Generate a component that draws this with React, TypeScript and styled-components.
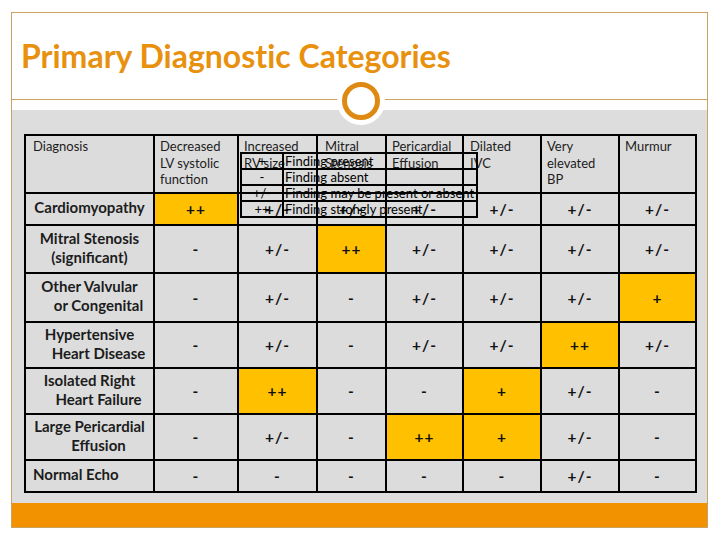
import React from 'react';
import styled, { createGlobalStyle } from 'styled-components';

const Global = createGlobalStyle`
  html, body { margin: 0; padding: 0; background: #ffffff; }
  body { font-family: Lato, "Liberation Sans", sans-serif; }
`;

const Slide = styled.div`
  position: relative;
  box-sizing: border-box;
  margin: 12px 0 0 11px;
  width: 697px;
  height: 516px;
  border: 1px solid #c9a25f;
  display: flex;
  flex-direction: column;
  background: #ffffff;
`;

const TitleBar = styled.div`
  height: 86px;
  box-sizing: border-box;
  padding: 24px 0 0 9px;
`;

const Title = styled.h1`
  margin: 0;
  font-family: Lato, "Liberation Sans", sans-serif;
  font-weight: 700;
  font-size: 32px;
  line-height: 38px;
  font-variant-ligatures: none;
  color: #e8910f;
  white-space: nowrap;
`;

const Divider = styled.div`
  height: 1px;
  background: #c9a25f;
`;

const Gap = styled.div`
  height: 10px;
`;

const Badge = styled.div`
  position: absolute;
  left: 325px;
  top: 64px;
  width: 48px;
  height: 48px;
  border-radius: 50%;
  background: #ffffff;
  display: flex;
  align-items: center;
  justify-content: center;
`;

const Ring = styled.div`
  box-sizing: border-box;
  width: 38px;
  height: 38px;
  border-radius: 50%;
  border: 5px solid #de8a12;
  background: #ffffff;
`;

const Content = styled.div`
  height: 393px;
  box-sizing: border-box;
  background: #dddddd;
  padding: 24px 0 0 12px;
`;

const Table = styled.div`
  position: relative;
  display: grid;
  grid-template-columns: 127px 82px 77px 67px 75px 76px 76px 75px;
  grid-template-rows: 56px 30px 46px 47px 44px 44px 44px 30px;
  gap: 2px;
  padding: 2px;
  background: #000000;
  width: fit-content;
`;

const HeadCell = styled.div<{ $pad: number }>`
  background: #dcdcdc;
  padding: 2px 4px 0 ${(p) => p.$pad}px;
  font-size: 13px;
  line-height: 16.5px;
  color: #1c1c1c;
`;

const LabelCell = styled.div<{ $align: 'left' | 'center' }>`
  background: #dcdcdc;
  display: flex;
  flex-direction: column;
  justify-content: center;
  align-items: ${(p) => (p.$align === 'left' ? 'flex-start' : 'center')};
  padding: 0 0 3px ${(p) => (p.$align === 'left' ? '7px' : '0')};
  font-weight: 700;
  font-size: 15px;
  line-height: 19px;
  color: #1c1c1c;
`;

const LabelLine = styled.span<{ $shift?: number }>`
  display: block;
  white-space: nowrap;
  padding-left: ${(p) => (p.$shift ? p.$shift : 0)}px;
`;

const ValueCell = styled.div<{ $hi?: boolean }>`
  background: ${(p) => (p.$hi ? '#ffc000' : '#dcdcdc')};
  display: flex;
  align-items: center;
  justify-content: center;
  font-weight: 700;
  font-size: 15.5px;
  letter-spacing: 1px;
  color: #111111;
`;

const Legend = styled.div`
  position: absolute;
  left: 216px;
  top: 18px;
  width: 238px;
  box-sizing: border-box;
  display: grid;
  grid-template-columns: 42px 1fr;
  grid-template-rows: repeat(4, 16px);
  border-top: 2px solid #000;
  border-left: 2px solid #000;
`;

const LegendCell = styled.div<{ $center?: boolean }>`
  box-sizing: border-box;
  border-right: 2px solid #000;
  border-bottom: 2px solid #000;
  font-size: 13px;
  line-height: 14px;
  color: #000;
  white-space: nowrap;
  text-align: ${(p) => (p.$center ? 'center' : 'left')};
  padding-left: ${(p) => (p.$center ? 0 : 1)}px;
`;

const Footer = styled.div`
  height: 24px;
  background: #f39200;
`;

const headers: { lines: string[]; pad: number }[] = [
  { lines: ['Diagnosis'], pad: 7 },
  { lines: ['Decreased', 'LV systolic', 'function'], pad: 5 },
  { lines: ['Increased', 'RV size'], pad: 5 },
  { lines: ['Mitral', 'Stenosis'], pad: 7 },
  { lines: ['Pericardial', 'Effusion'], pad: 5 },
  { lines: ['Dilated', 'IVC'], pad: 6 },
  { lines: ['Very', 'elevated', 'BP'], pad: 5 },
  { lines: ['Murmur'], pad: 5 },
];

type Row = {
  label: { text: string; shift?: number }[];
  align: 'left' | 'center';
  values: string[];
  hi: number[];
};

const rows: Row[] = [
  { label: [{ text: 'Cardiomyopathy' }], align: 'center', values: ['++', '+/-', '+/-', '+/-', '+/-', '+/-', '+/-'], hi: [0] },
  { label: [{ text: 'Mitral Stenosis' }, { text: '(significant)' }], align: 'center', values: ['-', '+/-', '++', '+/-', '+/-', '+/-', '+/-'], hi: [2] },
  { label: [{ text: 'Other Valvular' }, { text: 'or Congenital', shift: 18 }], align: 'center', values: ['-', '+/-', '-', '+/-', '+/-', '+/-', '+'], hi: [6] },
  { label: [{ text: 'Hypertensive' }, { text: 'Heart Disease', shift: 18 }], align: 'center', values: ['-', '+/-', '-', '+/-', '+/-', '++', '+/-'], hi: [5] },
  { label: [{ text: 'Isolated Right' }, { text: 'Heart Failure', shift: 18 }], align: 'center', values: ['-', '++', '-', '-', '+', '+/-', '-'], hi: [1, 4] },
  { label: [{ text: 'Large Pericardial' }, { text: 'Effusion', shift: 18 }], align: 'center', values: ['-', '+/-', '-', '++', '+', '+/-', '-'], hi: [3, 4] },
  { label: [{ text: 'Normal Echo' }], align: 'left', values: ['-', '-', '-', '-', '-', '+/-', '-'], hi: [] },
];

const legend: [string, string][] = [
  ['+', 'Finding present'],
  ['-', 'Finding absent'],
  ['+/-', 'Finding may be present or absent'],
  ['++', 'Finding strongly present'],
];

export default function App() {
  return (
    <>
      <Global />
      <Slide>
        <TitleBar>
          <Title>Primary Diagnostic Categories</Title>
        </TitleBar>
        <Divider />
        <Gap />
        <Content>
          <Table>
            {headers.map((h, i) => (
              <HeadCell key={`h${i}`} $pad={h.pad}>
                {h.lines.map((l, j) => (
                  <div key={j}>{l}</div>
                ))}
              </HeadCell>
            ))}
            {rows.map((r, ri) => (
              <React.Fragment key={`r${ri}`}>
                <LabelCell $align={r.align}>
                  {r.label.map((l, j) => (
                    <LabelLine key={j} $shift={l.shift}>
                      {l.text}
                    </LabelLine>
                  ))}
                </LabelCell>
                {r.values.map((v, vi) => (
                  <ValueCell key={vi} $hi={r.hi.includes(vi)}>
                    {v}
                  </ValueCell>
                ))}
              </React.Fragment>
            ))}
            <Legend>
              {legend.map(([sym, text], i) => (
                <React.Fragment key={`l${i}`}>
                  <LegendCell $center>{sym}</LegendCell>
                  <LegendCell>{text}</LegendCell>
                </React.Fragment>
              ))}
            </Legend>
          </Table>
        </Content>
        <Footer />
        <Badge>
          <Ring />
        </Badge>
      </Slide>
    </>
  );
}
